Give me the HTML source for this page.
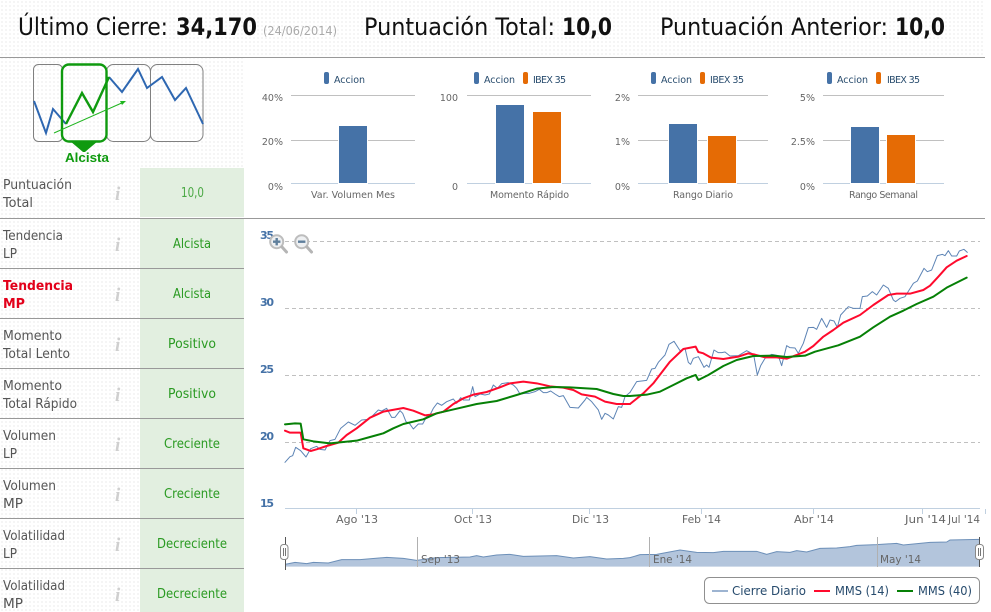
<!DOCTYPE html>
<html lang="es">
<head>
<meta charset="utf-8">
<title>Análisis</title>
<style>
html,body{margin:0;padding:0;background:#fff;width:991px;height:612px;overflow:hidden}
svg{display:block;font-family:"DejaVu Sans","Liberation Sans",sans-serif}
.t{font-size:13px;fill:#555}
.r{font-size:13px;fill:#e2001a;font-weight:bold}
.v{font-size:13px;fill:#2a9a22}
.i{font-family:"Liberation Serif",serif;font-style:italic;font-weight:bold;font-size:19px;fill:#cfcfcf}
.h{font-size:24px;fill:#111}
.b{font-size:24px;fill:#111;font-weight:bold}
.a{font-size:9.5px;fill:#666}
.l{font-size:9.5px;fill:#274b6d}
.y{font-size:11px;fill:#4572a7;font-weight:bold}
.x{font-size:11px;fill:#666}
.g{font-size:12px;fill:#274b6d}
</style>
</head>
<body>
<svg width="991" height="612" viewBox="0 0 991 612" xmlns="http://www.w3.org/2000/svg">
<defs>
<pattern id="d" width="4" height="4" patternUnits="userSpaceOnUse"><rect x="1" y="1" width="2" height="2" fill="#f5f5f5"/></pattern>
</defs>
<rect width="991" height="612" fill="#fff"/>
<rect x="0" y="0" width="985" height="57" fill="url(#d)"/>
<rect x="0" y="58" width="244" height="110" fill="url(#d)"/>
<rect x="0" y="168" width="140" height="444" fill="url(#d)"/>
<rect x="140" y="168" width="104" height="444" fill="#e2efe0"/>
<rect x="140" y="217" width="104" height="1" fill="#fff"/>

<!-- Header -->
<text class="h" x="18" y="35" textLength="150" lengthAdjust="spacingAndGlyphs">Último Cierre:</text>
<text class="b" x="176" y="35" textLength="81" lengthAdjust="spacingAndGlyphs">34,170</text>
<text x="263" y="35" font-size="12" fill="#aaa" textLength="74" lengthAdjust="spacingAndGlyphs">(24/06/2014)</text>
<text class="h" x="364" y="35" textLength="191" lengthAdjust="spacingAndGlyphs">Puntuación Total:</text>
<text class="b" x="562" y="35" textLength="50" lengthAdjust="spacingAndGlyphs">10,0</text>
<text class="h" x="660" y="35" textLength="228" lengthAdjust="spacingAndGlyphs">Puntuación Anterior:</text>
<text class="b" x="895" y="35" textLength="50" lengthAdjust="spacingAndGlyphs">10,0</text>

<rect x="0" y="57" width="985" height="1" fill="#999"/>
<rect x="0" y="218" width="985" height="1" fill="#999"/>

<!-- Logo -->
<g fill="none" stroke="#808080" stroke-width="1">
<rect x="33.5" y="64.5" width="29" height="77" rx="5"/>
<rect x="106.5" y="64.5" width="44" height="77" rx="7"/>
<rect x="150.5" y="64.5" width="52.5" height="77" rx="7"/>
</g>
<polyline points="34,101 46,133 53,109 66,124" fill="none" stroke="#2e67b1" stroke-width="2"/>
<polyline points="109,77 122,92 138,69 147,88 162,77 175,100 186,88 203,124" fill="none" stroke="#2e67b1" stroke-width="2"/>
<rect x="62" y="64.5" width="44.5" height="77" rx="7" fill="none" stroke="#0f9a0f" stroke-width="2.4"/>
<polyline points="66,124 82,93 93,112 109,77" fill="none" stroke="#0f9a0f" stroke-width="2.4"/>
<polygon points="70,141 98,141 85,152 83,152" fill="#0f9a0f"/>
<line x1="54" y1="133" x2="124" y2="102" stroke="#1fb51f" stroke-width="1"/>
<polygon points="126,101 120,101 122,105" fill="#1fb51f"/>
<text x="65" y="162" font-family="Liberation Sans, sans-serif" font-size="13" font-weight="bold" fill="#0f9a0f" textLength="44" lengthAdjust="spacingAndGlyphs">Alcista</text>

<!-- Table -->
<text class="t" x="3" y="189" textLength="69" lengthAdjust="spacingAndGlyphs">Puntuación</text>
<text class="t" x="3" y="207" textLength="30" lengthAdjust="spacingAndGlyphs">Total</text>
<text class="i" x="115" y="200">i</text>
<text class="v" x="181" y="197" textLength="23" lengthAdjust="spacingAndGlyphs" style="fill:#4aa844">10,0</text>

<text class="t" x="3" y="240" textLength="60" lengthAdjust="spacingAndGlyphs">Tendencia</text>
<text class="t" x="3" y="258" textLength="14" lengthAdjust="spacingAndGlyphs">LP</text>
<text class="i" x="115" y="251">i</text>
<text class="v" x="173" y="248" textLength="38" lengthAdjust="spacingAndGlyphs">Alcista</text>
<rect x="0" y="268" width="244" height="1" fill="#999"/>

<text class="r" x="3" y="290" textLength="70" lengthAdjust="spacingAndGlyphs">Tendencia</text>
<text class="r" x="3" y="308" textLength="22" lengthAdjust="spacingAndGlyphs">MP</text>
<text class="i" x="115" y="301">i</text>
<text class="v" x="173" y="298" textLength="38" lengthAdjust="spacingAndGlyphs">Alcista</text>
<rect x="0" y="318" width="244" height="1" fill="#999"/>

<text class="t" x="3" y="340" textLength="59" lengthAdjust="spacingAndGlyphs">Momento</text>
<text class="t" x="3" y="358" textLength="67" lengthAdjust="spacingAndGlyphs">Total Lento</text>
<text class="i" x="115" y="351">i</text>
<text class="v" x="168" y="348" textLength="48" lengthAdjust="spacingAndGlyphs">Positivo</text>
<rect x="0" y="368" width="244" height="1" fill="#999"/>

<text class="t" x="3" y="390" textLength="59" lengthAdjust="spacingAndGlyphs">Momento</text>
<text class="t" x="3" y="408" textLength="74" lengthAdjust="spacingAndGlyphs">Total Rápido</text>
<text class="i" x="115" y="401">i</text>
<text class="v" x="168" y="398" textLength="48" lengthAdjust="spacingAndGlyphs">Positivo</text>
<rect x="0" y="418" width="244" height="1" fill="#999"/>

<text class="t" x="3" y="440" textLength="53" lengthAdjust="spacingAndGlyphs">Volumen</text>
<text class="t" x="3" y="458" textLength="14" lengthAdjust="spacingAndGlyphs">LP</text>
<text class="i" x="115" y="451">i</text>
<text class="v" x="164" y="448" textLength="56" lengthAdjust="spacingAndGlyphs">Creciente</text>
<rect x="0" y="468" width="244" height="1" fill="#999"/>

<text class="t" x="3" y="490" textLength="53" lengthAdjust="spacingAndGlyphs">Volumen</text>
<text class="t" x="3" y="508" textLength="20" lengthAdjust="spacingAndGlyphs">MP</text>
<text class="i" x="115" y="501">i</text>
<text class="v" x="164" y="498" textLength="56" lengthAdjust="spacingAndGlyphs">Creciente</text>
<rect x="0" y="518" width="244" height="1" fill="#999"/>

<text class="t" x="3" y="540" textLength="62" lengthAdjust="spacingAndGlyphs">Volatilidad</text>
<text class="t" x="3" y="558" textLength="14" lengthAdjust="spacingAndGlyphs">LP</text>
<text class="i" x="115" y="551">i</text>
<text class="v" x="157" y="548" textLength="70" lengthAdjust="spacingAndGlyphs">Decreciente</text>
<rect x="0" y="568" width="244" height="1" fill="#999"/>

<text class="t" x="3" y="590" textLength="62" lengthAdjust="spacingAndGlyphs">Volatilidad</text>
<text class="t" x="3" y="608" textLength="20" lengthAdjust="spacingAndGlyphs">MP</text>
<text class="i" x="115" y="601">i</text>
<text class="v" x="157" y="598" textLength="70" lengthAdjust="spacingAndGlyphs">Decreciente</text>

<!-- Bar chart grids -->
<g stroke="#c0c0c0" stroke-width="1">
<line x1="291" x2="415" y1="95.5" y2="95.5"/><line x1="291" x2="415" y1="140.5" y2="140.5"/>
<line x1="467" x2="591" y1="95.5" y2="95.5"/>
<line x1="638" x2="768" y1="95.5" y2="95.5"/><line x1="638" x2="768" y1="140.5" y2="140.5"/>
<line x1="823" x2="944" y1="95.5" y2="95.5"/><line x1="823" x2="944" y1="140.5" y2="140.5"/>
</g>
<g stroke="#c0d0e0" stroke-width="1">
<line x1="291" x2="415" y1="183.5" y2="183.5"/>
<line x1="467" x2="591" y1="183.5" y2="183.5"/>
<line x1="638" x2="768" y1="183.5" y2="183.5"/>
<line x1="823" x2="944" y1="183.5" y2="183.5"/>
</g>
<g stroke="#fff" stroke-width="1">
<rect x="338.5" y="125.5" width="29" height="58" fill="#4572a7"/>
<rect x="495.5" y="104.5" width="29" height="79" fill="#4572a7"/>
<rect x="532.5" y="111.5" width="29" height="72" fill="#e56b05"/>
<rect x="668.5" y="123.5" width="29" height="60" fill="#4572a7"/>
<rect x="707.5" y="135.5" width="29" height="48" fill="#e56b05"/>
<rect x="850.5" y="126.5" width="29" height="57" fill="#4572a7"/>
<rect x="886.5" y="134.5" width="29" height="49" fill="#e56b05"/>
</g>

<!-- Bar legends -->
<rect x="324" y="72" width="5" height="12" rx="2" fill="#4572a7"/>
<text class="l" x="334" y="83" textLength="31">Accion</text>
<rect x="474" y="72" width="5" height="12" rx="2" fill="#4572a7"/>
<text class="l" x="484" y="83" textLength="31">Accion</text>
<rect x="523" y="72" width="5" height="12" rx="2" fill="#e56b05"/>
<text class="l" x="533" y="83" textLength="33">IBEX 35</text>
<rect x="651" y="72" width="5" height="12" rx="2" fill="#4572a7"/>
<text class="l" x="661" y="83" textLength="31">Accion</text>
<rect x="700" y="72" width="5" height="12" rx="2" fill="#e56b05"/>
<text class="l" x="710" y="83" textLength="34">IBEX 35</text>
<rect x="827" y="72" width="5" height="12" rx="2" fill="#4572a7"/>
<text class="l" x="837" y="83" textLength="31">Accion</text>
<rect x="876" y="72" width="5" height="12" rx="2" fill="#e56b05"/>
<text class="l" x="887" y="83" textLength="33">IBEX 35</text>

<!-- Bar axis labels -->
<g text-anchor="end">
<text class="a" x="283" y="101">40%</text><text class="a" x="283" y="145">20%</text><text class="a" x="283" y="190">0%</text>
<text class="a" x="458" y="101">100</text><text class="a" x="458" y="190">0</text>
<text class="a" x="630" y="101">2%</text><text class="a" x="630" y="145">1%</text><text class="a" x="630" y="190">0%</text>
<text class="a" x="815" y="101">5%</text><text class="a" x="815" y="145">2.5%</text><text class="a" x="815" y="190">0%</text>
</g>
<text class="a" x="311" y="198" textLength="84">Var. Volumen Mes</text>
<text class="a" x="490" y="198" textLength="79">Momento Rápido</text>
<text class="a" x="673" y="198" textLength="60">Rango Diario</text>
<text class="a" x="849" y="198" textLength="69">Rango Semanal</text>

<!-- Main chart -->
<g stroke="#c0c0c0" stroke-width="1" stroke-dasharray="4 3">
<line x1="285" x2="980" y1="241.5" y2="241.5"/>
<line x1="285" x2="980" y1="308.5" y2="308.5"/>
<line x1="285" x2="980" y1="375.5" y2="375.5"/>
<line x1="285" x2="980" y1="442.5" y2="442.5"/>
</g>
<line x1="285" x2="980" y1="508.5" y2="508.5" stroke="#c0d0e0"/>
<g stroke="#c0d0e0">
<line x1="356.5" x2="356.5" y1="509" y2="514"/>
<line x1="472.5" x2="472.5" y1="509" y2="514"/>
<line x1="589.5" x2="589.5" y1="509" y2="514"/>
<line x1="701.5" x2="701.5" y1="509" y2="514"/>
<line x1="813.5" x2="813.5" y1="509" y2="514"/>
<line x1="922.5" x2="922.5" y1="509" y2="514"/>
<line x1="985.5" x2="985.5" y1="509" y2="514"/>
</g>
<text class="y" x="260" y="239" textLength="14">35</text>
<text class="y" x="260" y="306" textLength="14">30</text>
<text class="y" x="260" y="373" textLength="14">25</text>
<text class="y" x="260" y="440" textLength="14">20</text>
<text class="y" x="260" y="507" textLength="14">15</text>

<text class="x" x="336" y="523" textLength="42" lengthAdjust="spacingAndGlyphs">Ago '13</text>
<text class="x" x="454" y="523" textLength="38" lengthAdjust="spacingAndGlyphs">Oct '13</text>
<text class="x" x="572" y="523" textLength="37" lengthAdjust="spacingAndGlyphs">Dic '13</text>
<text class="x" x="682" y="523" textLength="39" lengthAdjust="spacingAndGlyphs">Feb '14</text>
<text class="x" x="794" y="523" textLength="40" lengthAdjust="spacingAndGlyphs">Abr '14</text>
<text class="x" x="905" y="523" textLength="41" lengthAdjust="spacingAndGlyphs">Jun '14</text>
<text class="x" x="948" y="523" textLength="32" lengthAdjust="spacingAndGlyphs">Jul '14</text>

<!-- Series left half -->
<g transform="translate(270 220) scale(.33333)" fill="none" stroke-linejoin="round" stroke-linecap="round">
<polyline stroke="#5d84b5" stroke-width="3" points="45,727 60,710 68,707 77,682 92,692 108,711 122,686 140,679 150,688 165,690 180,662 195,658 212,625 235,606 255,616 275,600 295,598 310,585 325,570 335,573 350,565 365,592 375,592 390,572 398,580 408,605 418,610 430,627 445,612 458,612 470,590 480,585 490,565 502,549 515,556 530,545 550,537 560,550 572,533 580,540 598,540 608,500 615,530 630,522 645,525 658,522 670,495 682,505 695,491 715,488 730,495 740,505 750,522 765,520 778,520 795,515 808,508 820,518 830,518 842,513 855,522 868,530 880,527 900,562 925,564 945,540 950,532 965,545 985,570 995,598 1005,580 1015,585 1030,597 1045,560 1055,562 1065,530 1080,517"/>
<polyline stroke="#ff0a2d" stroke-width="6" points="45,632 60,638 92,638 100,685 122,693 140,688 170,678 205,668 230,645 260,625 300,593 340,575 400,564 430,572 465,586 490,583 520,575 550,552 580,535 610,524 650,516 690,502 720,490 760,485 800,490 840,499 880,503 910,510 935,523 975,530 1005,545 1040,552 1080,552"/>
<polyline stroke="#068006" stroke-width="6" points="45,613 75,610 92,611 100,658 130,664 180,670 220,666 260,662 300,651 340,640 370,625 400,612 460,598 500,580 560,566 620,552 680,543 740,525 800,506 850,501 900,502 980,507 1030,522 1060,528 1080,528"/>
</g>
<!-- Series right half -->
<g transform="translate(630 220) scale(.33333)" fill="none" stroke-linejoin="round" stroke-linecap="round">
<polyline stroke="#5d84b5" stroke-width="3" points="0,517 20,485 50,481 65,447 75,445 85,427 105,405 117,373 132,364 150,392 165,385 175,427 182,433 190,415 205,410 222,442 230,435 237,442 252,390 265,398 275,398 285,396 300,408 325,407 350,392 365,400 372,410 382,465 392,437 405,415 425,403 445,407 455,437 470,377 480,383 495,384 505,400 520,370 535,323 550,322 560,328 575,295 590,322 600,300 612,303 622,322 632,285 655,260 670,265 690,265 697,230 712,228 727,215 740,225 760,195 775,205 790,240 797,245 810,235 825,230 850,190 862,183 882,145 892,155 905,150 922,107 937,103 945,107 955,92 965,108 980,108 988,93 1002,88 1012,97"/>
<polyline stroke="#ff0a2d" stroke-width="6" points="0,552 15,540 40,520 70,490 120,425 160,387 197,380 205,396 220,400 243,413 280,417 325,410 355,400 375,404 405,412 440,412 470,416 500,405 525,395 550,378 580,350 610,330 640,308 690,285 730,255 775,225 800,221 840,221 880,210 900,197 925,170 950,142 980,122 1010,108"/>
<polyline stroke="#068006" stroke-width="6" points="0,528 50,524 90,515 130,495 170,475 197,465 205,480 235,465 280,438 320,420 370,408 430,407 470,411 525,407 555,395 625,376 690,350 730,322 780,290 820,272 860,252 910,230 950,203 1010,173"/>
</g>

<!-- Zoom icons -->
<g fill="none" stroke-linecap="round">
<circle cx="276.7" cy="241.7" r="6.5" stroke="#bdbdbd" stroke-width="2" fill="#eef0f2"/>
<line x1="282" y1="247" x2="286.5" y2="252" stroke="#b5b5b5" stroke-width="3"/>
<path d="M273 241.7H280.4M276.7 238V245.4" stroke="#5f7f9c" stroke-width="2.4" stroke-linecap="butt"/>
<circle cx="301.7" cy="241.7" r="6.5" stroke="#bdbdbd" stroke-width="2" fill="#eef0f2"/>
<line x1="307" y1="247" x2="311.5" y2="252" stroke="#b5b5b5" stroke-width="3"/>
<path d="M298 241.7H305.4" stroke="#5f7f9c" stroke-width="2.4" stroke-linecap="butt"/>
</g>

<!-- Navigator -->
<g transform="translate(270 510) scale(.33333)">
<polygon fill="#b3c5dc" stroke="none" points="45,170 45,163 75,157 110,161 130,157 175,159 215,149 270,149 350,142 400,145 440,151 500,143 600,141 620,137 640,141 680,135 720,133 760,139 860,137 910,144 960,140 1010,147 1060,145 1080,143 1080,170"/>
<polyline fill="none" stroke="#6c8fb8" stroke-width="3" points="45,163 75,157 110,161 130,157 175,159 215,149 270,149 350,142 400,145 440,151 500,143 600,141 620,137 640,141 680,135 720,133 760,139 860,137 910,144 960,140 1010,147 1060,145 1080,143"/>
</g>
<g transform="translate(630 510) scale(.33333)">
<polygon fill="#b3c5dc" stroke="none" points="0,170 0,143 30,134 80,133 150,120 200,127 250,128 280,124 380,124 410,133 440,125 480,127 500,122 530,126 570,115 620,114 660,110 680,106 740,104 800,100 820,105 900,97 950,96 960,90 1048,88 1048,170"/>
<polyline fill="none" stroke="#6c8fb8" stroke-width="3" points="0,143 30,134 80,133 150,120 200,127 250,128 280,124 380,124 410,133 440,125 480,127 500,122 530,126 570,115 620,114 660,110 680,106 740,104 800,100 820,105 900,97 950,96 960,90 1048,88"/>
</g>
<g stroke="#b0b0b0" stroke-width="1">
<line x1="417.5" x2="417.5" y1="537" y2="567"/>
<line x1="649.5" x2="649.5" y1="537" y2="567"/>
<line x1="877.5" x2="877.5" y1="537" y2="567"/>
</g>
<text class="x" x="421" y="563" textLength="39" lengthAdjust="spacingAndGlyphs">Sep '13</text>
<text class="x" x="653" y="563" textLength="39" lengthAdjust="spacingAndGlyphs">Ene '14</text>
<text class="x" x="880" y="563" textLength="41" lengthAdjust="spacingAndGlyphs">May '14</text>

<line x1="285.5" x2="285.5" y1="537" y2="570" stroke="#555"/>
<rect x="280.5" y="544.5" width="7.5" height="15" rx="3" fill="#fff" stroke="#888"/>
<path d="M283.5 548V556M285.5 548V556" stroke="#777" fill="none"/>
<line x1="979.5" x2="979.5" y1="537" y2="567" stroke="#555"/>
<rect x="975.5" y="544.5" width="8" height="15" rx="3" fill="#fff" stroke="#888"/>
<path d="M978.5 548V556M980.5 548V556" stroke="#777" fill="none"/>

<!-- Legend -->
<rect x="704.5" y="577.5" width="275" height="26" rx="5" fill="#fff" stroke="#909090"/>
<line x1="712" x2="728" y1="591" y2="591" stroke="#9db4d1" stroke-width="2"/>
<text class="g" x="732" y="595" textLength="74" lengthAdjust="spacingAndGlyphs">Cierre Diario</text>
<line x1="814" x2="830" y1="591" y2="591" stroke="#ff0a2d" stroke-width="2"/>
<text class="g" x="835" y="595" textLength="54" lengthAdjust="spacingAndGlyphs">MMS (14)</text>
<line x1="897" x2="913" y1="591" y2="591" stroke="#068006" stroke-width="2"/>
<text class="g" x="918" y="595" textLength="54" lengthAdjust="spacingAndGlyphs">MMS (40)</text>
</svg>
</body>
</html>
